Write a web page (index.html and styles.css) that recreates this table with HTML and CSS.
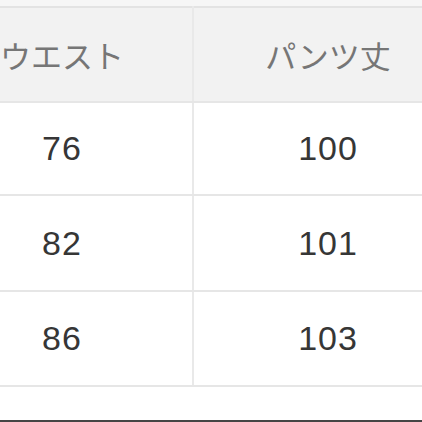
FILE: index.html
```html
<!DOCTYPE html>
<html lang="ja">
<head>
<meta charset="utf-8">
<link rel="stylesheet" href="styles.css">
</head>
<body>
<div class="page">
  <div class="top-strip"></div>
  <table class="size-table">
    <thead>
      <tr class="row-head">
        <th class="col-left">ウエスト</th>
        <th class="col-right">パンツ丈</th>
      </tr>
    </thead>
    <tbody>
      <tr class="row-1"><td class="col-left">76</td><td class="col-right">100</td></tr>
      <tr class="row-2"><td class="col-left">82</td><td class="col-right">101</td></tr>
      <tr class="row-3"><td class="col-left">86</td><td class="col-right">103</td></tr>
    </tbody>
  </table>
  <div class="spacer"></div>
  <div class="bottom-bar"></div>
</div>
</body>
</html>
```

FILE: styles.css
```css
html, body {
  margin: 0;
  padding: 0;
  background: #ffffff;
}
.page {
  width: 422px;
  height: 422px;
  overflow: hidden;
  display: flex;
  flex-direction: column;
}
.top-strip {
  height: 6px;
  background: #f6f6f6;
  flex: none;
}
.size-table {
  flex: none;
  margin-left: -68px;
  width: 530px;
  border-collapse: collapse;
  border-top: 2px solid #e3e3e3;
  font-family: "Noto Sans CJK JP", "Noto Sans", sans-serif;
  table-layout: fixed;
}
.size-table th,
.size-table td {
  padding: 0;
  text-align: center;
  vertical-align: middle;
  border-bottom: 2px solid #e6e6e6;
}
.size-table .col-left {
  width: 260px;
  border-right: 2px solid #e9e9e9;
}
.size-table th {
  background: #f2f2f2;
  color: #767676;
  font-weight: 400;
  font-size: 31px;
  height: 93px;
}
.size-table td {
  color: #363636;
  font-size: 34px;
  letter-spacing: 1px;
  font-family: "Liberation Sans", "Noto Sans CJK JP", sans-serif;
}
.row-1 td { height: 91px; }
.row-2 td { height: 94px; }
.row-3 td { height: 93px; }
.spacer {
  flex: 1;
}
.bottom-bar {
  height: 2px;
  background: #454545;
  flex: none;
}
```
